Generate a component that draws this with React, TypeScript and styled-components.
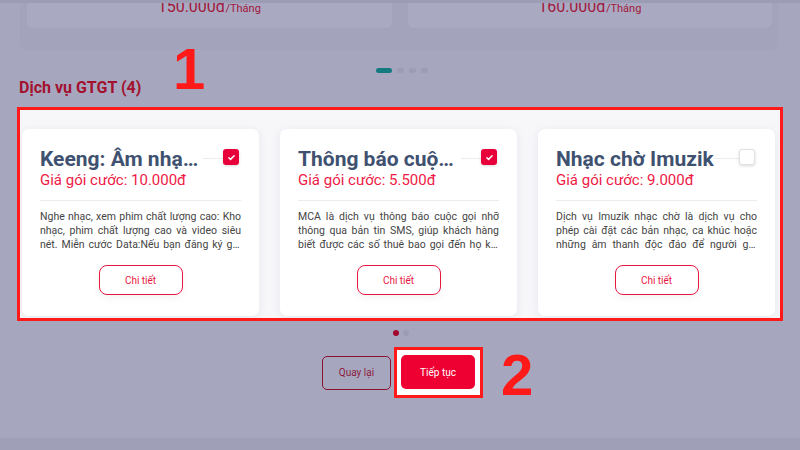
import React from 'react';
import styled, { createGlobalStyle } from 'styled-components';

const GlobalStyle = createGlobalStyle`
  body {
    margin: 0;
    font-family: Roboto, 'Liberation Sans', sans-serif;
  }
`;

interface IService {
  title: string;
  price: string;
  desc: string;
  checked: boolean;
}

const services: IService[] = [
  {
    title: 'Keeng: Âm nhạc và phim',
    price: '10.000đ',
    desc: 'Nghe nhạc, xem phim chất lượng cao: Kho nhạc, phim chất lượng cao và video siêu nét. Miễn cước Data:Nếu bạn đăng ký gói cước này',
    checked: true,
  },
  {
    title: 'Thông báo cuộc gọi nhỡ',
    price: '5.500đ',
    desc: 'MCA là dịch vụ thông báo cuộc gọi nhỡ thông qua bản tin SMS, giúp khách hàng biết được các số thuê bao gọi đến họ khi máy bận',
    checked: true,
  },
  {
    title: 'Nhạc chờ Imuzik',
    price: '9.000đ',
    desc: 'Dịch vụ Imuzik nhạc chờ là dịch vụ cho phép cài đặt các bản nhạc, ca khúc hoặc những âm thanh độc đáo để người gọi nghe',
    checked: false,
  },
];

const CheckIcon = () => (
  <svg width="9" height="9" viewBox="0 0 24 24" fill="none" stroke="#fff" strokeWidth="4" strokeLinecap="round" strokeLinejoin="round">
    <path d="M5 12.5l4.5 4.5L19 7.5" />
  </svg>
);

const App = () => {
  return (
    <>
      <GlobalStyle />
      <Page>
        <TopStrip />
        <TopPanel>
          <PlanCard>
            <PlanPrice>
              150.000đ<small>/Tháng</small>
            </PlanPrice>
          </PlanCard>
          <PlanCard>
            <PlanPrice>
              160.000đ<small>/Tháng</small>
            </PlanPrice>
          </PlanCard>
        </TopPanel>
        <PlanDots>
          <PlanDot $active />
          <PlanDot />
          <PlanDot />
          <PlanDot />
        </PlanDots>
        <SectionTitle>
          Dịch vụ GTGT (4)
          <Mark $left={154} $top={-38}>1</Mark>
        </SectionTitle>
        <Highlight>
          <CardRow>
            {services.map((s, i) => (
              <Card key={i}>
                <TitleRow>
                  <CardTitle>{s.title}</CardTitle>
                  <TitleLine />
                  <Check $checked={s.checked}>{s.checked && <CheckIcon />}</Check>
                </TitleRow>
                <Price>Giá gói cước: {s.price}</Price>
                <Divider />
                <Desc>{s.desc}</Desc>
                <DetailButton>Chi tiết</DetailButton>
              </Card>
            ))}
          </CardRow>
        </Highlight>
        <CardDots>
          <CardDot $active />
          <CardDot />
        </CardDots>
        <Actions>
          <BackButton>Quay lại</BackButton>
          <NextFrame>
            <NextButton>Tiếp tục</NextButton>
            <Mark $left={104} $top={-4}>2</Mark>
          </NextFrame>
        </Actions>
        <BottomStrip />
      </Page>
    </>
  );
};

const Page = styled.div`
  position: relative;
  width: 800px;
  height: 450px;
  overflow: hidden;
  background-color: #a6a7bf;
  display: flex;
  flex-direction: column;
`;

const TopStrip = styled.div`
  height: 3px;
  background-color: #9c9cb5;
  flex-shrink: 0;
`;

const TopPanel = styled.div`
  display: flex;
  gap: 16px;
  margin: 0 22px 0 20px;
  padding: 0 6px 22px 7px;
  background-color: #a3a4bc;
  border-radius: 0 0 6px 6px;
  flex-shrink: 0;
`;

const PlanCard = styled.div`
  flex: 1;
  height: 25px;
  background-color: #a9aac2;
  border-radius: 0 0 6px 6px;
  display: flex;
  justify-content: center;
  align-items: flex-start;
  overflow: hidden;
`;

const PlanPrice = styled.div`
  margin-top: -6px;
  font-size: 16px;
  color: #a1173b;
  small {
    font-size: 11px;
  }
`;

const PlanDots = styled.div`
  display: flex;
  justify-content: center;
  gap: 5px;
  margin-top: 18px;
  padding-left: 3px;
  flex-shrink: 0;
`;

const PlanDot = styled.span<{ $active?: boolean }>`
  width: ${(p) => (p.$active ? '16px' : '7px')};
  height: 5px;
  border-radius: 3px;
  background-color: ${(p) => (p.$active ? '#147a80' : '#9c9db5')};
`;

const SectionTitle = styled.div`
  position: relative;
  margin: 5px 0 0 19px;
  font-size: 16px;
  font-weight: 700;
  color: #a3112e;
  line-height: 19px;
  flex-shrink: 0;
`;

const Mark = styled.span<{ $left: number; $top: number }>`
  position: absolute;
  left: ${(p) => p.$left}px;
  top: ${(p) => p.$top}px;
  font-family: 'Liberation Sans', sans-serif;
  font-size: 58px;
  font-weight: 700;
  line-height: 1;
  color: #ff1a1a;
`;

const Highlight = styled.div`
  margin: 10px 0 0 17px;
  width: 760px;
  height: 208px;
  border: 3px solid #ff1a1a;
  background-color: #f7f7fa;
  overflow: hidden;
  flex-shrink: 0;
`;

const CardRow = styled.div`
  display: flex;
  gap: 21px;
  padding: 19px 0 0 2px;
`;

const Card = styled.div`
  width: 237px;
  height: 187px;
  flex-shrink: 0;
  box-sizing: border-box;
  padding: 17px 18px 0 18px;
  background-color: #fff;
  border-radius: 7px;
  box-shadow: 0 2px 10px rgba(40, 50, 90, 0.08);
  display: flex;
  flex-direction: column;
`;

const TitleRow = styled.div`
  display: flex;
  align-items: center;
`;

const CardTitle = styled.div`
  max-width: 163px;
  font-size: 21px;
  font-weight: 700;
  color: #3f5170;
  white-space: nowrap;
  overflow: hidden;
  text-overflow: ellipsis;
  line-height: 26px;
`;

const TitleLine = styled.div`
  flex: 1;
  height: 1px;
  background-color: #ececf0;
  margin-top: -2px;
`;

const Check = styled.div<{ $checked: boolean }>`
  width: 16px;
  height: 16px;
  box-sizing: border-box;
  border-radius: 3px;
  margin: -4px 2px 0 0;
  display: flex;
  align-items: center;
  justify-content: center;
  background-color: ${(p) => (p.$checked ? '#e8003a' : '#fff')};
  border: ${(p) => (p.$checked ? 'none' : '1px solid #e1e1e6')};
  box-shadow: 0 1px 3px rgba(0, 0, 0, 0.15);
`;

const Price = styled.div`
  font-size: 15px;
  color: #ee1a45;
  line-height: 16px;
  margin-top: 0;
`;

const Divider = styled.div`
  height: 1px;
  background-color: #ececf0;
  margin: 12px 0 9px;
`;

const Desc = styled.div`
  font-size: 10.5px;
  line-height: 14px;
  color: #444;
  text-align: justify;
  display: -webkit-box;
  -webkit-line-clamp: 3;
  -webkit-box-orient: vertical;
  overflow: hidden;
`;

const DetailButton = styled.div`
  align-self: center;
  margin-top: 13px;
  width: 84px;
  height: 30px;
  box-sizing: border-box;
  border: 1.5px solid #e8173f;
  border-radius: 8px;
  display: flex;
  align-items: center;
  justify-content: center;
  font-size: 10px;
  color: #e8173f;
  box-shadow: 0 3px 8px rgba(0, 0, 0, 0.05);
`;

const CardDots = styled.div`
  display: flex;
  justify-content: center;
  gap: 4px;
  margin-top: 9px;
  padding-left: 1px;
  flex-shrink: 0;
`;

const CardDot = styled.span<{ $active?: boolean }>`
  width: 6px;
  height: 6px;
  border-radius: 50%;
  background-color: ${(p) => (p.$active ? '#a3082c' : '#9c9db5')};
`;

const Actions = styled.div`
  display: flex;
  align-items: center;
  justify-content: center;
  gap: 3px;
  margin-top: 11px;
  padding-left: 5px;
  flex-shrink: 0;
`;

const BackButton = styled.div`
  width: 69px;
  height: 34px;
  box-sizing: border-box;
  border: 1.5px solid #8c1030;
  border-radius: 5px;
  display: flex;
  align-items: center;
  justify-content: center;
  font-size: 10px;
  color: #8c1a3c;
`;

const NextFrame = styled.div`
  position: relative;
  padding: 5px 5px 6px 4px;
  border: 3px solid #ff1a1a;
  background-color: #fff;
`;

const NextButton = styled.div`
  width: 74px;
  height: 34px;
  border-radius: 5px;
  background-color: #ee0033;
  display: flex;
  align-items: center;
  justify-content: center;
  font-size: 10px;
  color: #fff;
`;

const BottomStrip = styled.div`
  margin-top: auto;
  height: 12px;
  background-color: #9f9fb8;
  flex-shrink: 0;
`;

export default App;
